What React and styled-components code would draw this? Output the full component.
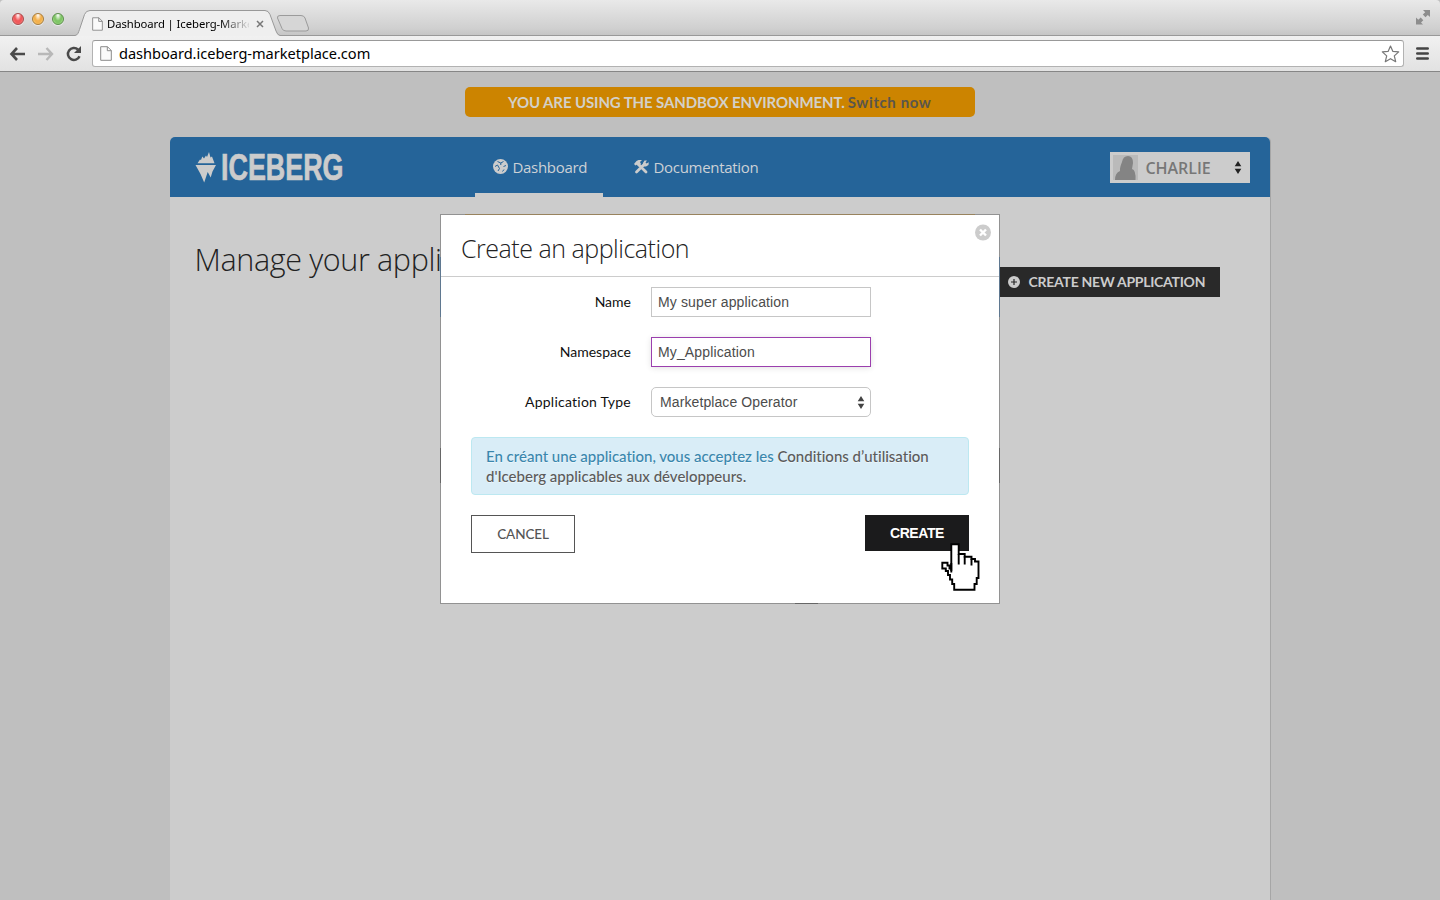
import React from 'react';
import styled, { createGlobalStyle } from 'styled-components';

const Global = createGlobalStyle`
  *{box-sizing:border-box}
  body{margin:0;background:#bfbfbf;overflow:hidden}
  svg{display:block;flex:none}
  button{cursor:pointer;margin:0}
`;
const ui = "'Noto Sans','Open Sans',sans-serif";
const lato = "Lato,sans-serif";
const open = "'Open Sans',sans-serif";
const helv = "'Liberation Sans',Arial,sans-serif";

const Screen = styled.div`position:relative;width:1440px;height:900px;overflow:hidden;display:flex;flex-direction:column;background:#bfbfbf;`;
const TitleBar = styled.header`height:36px;flex:none;display:flex;align-items:flex-end;position:relative;background:linear-gradient(#e9e9e9,#d0d0d0 80%,#c6c6c6);border-bottom:1px solid #999;border-radius:4px 4px 0 0;`;
const Lights = styled.div`display:flex;gap:8px;padding:0 0 10px 12px;width:75px;`;
const Light = styled.i`width:12px;height:12px;border-radius:50%;border:1px solid ${p => p.$edge};background:radial-gradient(ellipse at 50% 12%,#fff 0,${p => p.$c} 45%,${p => p.$c} 60%,${p => p.$lo} 100%);box-shadow:0 1px 1px rgba(255,255,255,.6);`;
const Tab = styled.div`position:relative;width:205px;height:26px;margin-bottom:-1px;flex:none;display:flex;align-items:center;padding:2px 0 0 17px;`;
const TabShape = styled.svg`position:absolute;left:0;top:0;`;
const TabTitle = styled.span`position:relative;width:142px;margin-left:4px;overflow:hidden;white-space:nowrap;font:11.3px/16px ${ui};letter-spacing:-.08px;color:#000;-webkit-mask-image:linear-gradient(90deg,#000 112px,transparent 145px);`;
const TabClose = styled.svg`position:relative;margin-left:7px;`;
const TabIcon = styled.svg`position:relative;`;
const NewTab = styled.svg`margin:0 0 3px -4px;`;
const Expand = styled.svg`margin:0 10px 10px auto;`;
const ToolBar = styled.nav`height:36px;flex:none;display:flex;align-items:center;padding:0 11px 0 9px;background:linear-gradient(#f1f1f1,#e2e2e2);border-bottom:1px solid #868686;`;
const NavIcon = styled.svg`margin-right:${p => p.$gap}px;`;
const Address = styled.div`height:27px;width:1312px;background:#fff;border:1px solid #b2b2b2;border-top-color:#999;border-radius:3px;display:flex;align-items:center;padding:0 3px 0 7px;margin-right:12px;`;
const Url = styled.span`font:14.6px/22px ${ui};color:#000;margin-left:7px;flex:1;letter-spacing:-.03px;padding-bottom:2px;`;

const Page = styled.main`flex:1;display:flex;flex-direction:column;align-items:center;padding-top:15px;`;
const Banner = styled.div`width:510px;height:30px;flex:none;border-radius:5px;background:#cc8400;display:flex;align-items:center;padding:0 0 0 43px;gap:3px;font:bold 15px/20px ${lato};color:#d3d0c9;white-space:nowrap;`;
const BannerText = styled.span`letter-spacing:${p => p.$ls}px;`;
const BannerLink = styled.a`color:#5a564c;letter-spacing:${p => p.$ls}px;`;
const Panel = styled.section`width:1101px;flex:1;margin-top:20px;border-radius:5px 5px 0 0;background:#ccc;border-right:1px solid #a6a6a6;`;
const Nav = styled.div`height:60px;background:#256499;border-radius:5px 5px 0 0;display:flex;padding-left:25px;align-items:stretch;`;
const Logo = styled.svg`margin-top:13px;overflow:visible;`;
const NavItem = styled.a`display:flex;align-items:center;gap:5px;padding:3px 0 0 18px;margin-left:${p => p.$ml}px;width:${p => p.$w}px;border-bottom:4px solid ${p => p.$on ? '#ccc' : 'transparent'};color:#ccd1d6;font:15px/20px ${open};letter-spacing:-.3px;`;
const User = styled.div`width:140px;height:31px;margin:15px 20px 0 auto;background:#ccc;display:flex;align-items:center;padding:0 8px 0 3px;`;
const UserName = styled.span`flex:1;margin-left:8px;font:600 16px/20px ${open};letter-spacing:-.05px;color:#777;`;
const Heading = styled.div`display:flex;justify-content:space-between;padding:40px 50px 0 25px;`;
const Title = styled.h1`margin:-1px 0 0;font:300 30.5px/46px ${open};letter-spacing:-.36px;color:#222;`;
const NewButton = styled.button`margin-top:30px;width:221px;height:30px;border:0;background:#292929;color:#ccc;display:flex;align-items:center;gap:9px;padding:0 0 0 9px;font:bold 14px/20px ${lato};letter-spacing:-.26px;white-space:nowrap;`;

const Modal = styled.div`position:absolute;left:440px;top:214px;width:560px;height:390px;padding:1px;
  background:linear-gradient(#98835e,#98835e) 25px 0/510px 1px no-repeat,linear-gradient(#5f7890,#5f7890) 0 43px/100% 60px no-repeat,linear-gradient(#666,#666) 0 234px/100% 35px no-repeat,linear-gradient(#666,#666) 355px 389px/23px 1px no-repeat,#929292;`;
const ModalBody = styled.div`height:388px;background:#fff;`;
const ModalHead = styled.div`height:62px;border-bottom:1px solid #ccc;display:flex;justify-content:space-between;padding:9px 8px 0 20px;`;
const ModalTitle = styled.h2`margin:0;padding-top:6px;font:300 25px/36px ${open};letter-spacing:-.48px;color:#222;`;
const Form = styled.form`padding:10px 30px 0;`;
const Field = styled.div`height:30px;margin-bottom:20px;display:flex;align-items:center;`;
const Label = styled.label`width:160px;margin-right:20px;text-align:right;font:400 14px/20px ${lato};letter-spacing:${p => p.$ls}px;color:#111;`;
const Input = styled.div`width:220px;height:30px;border:1px solid ${p => p.$focus ? '#9b3fae' : '#c6c6c6'};border-radius:${p => p.$round || 0}px;box-shadow:${p => p.$focus ? '0 1px 6px rgba(0,0,0,.12)' : 'none'};display:flex;align-items:center;justify-content:space-between;padding:0 5px 0 ${p => p.$round ? 8 : 6}px;font:14px/20px ${helv};letter-spacing:${p => p.$ls}px;color:#4c4c4c;`;
const Notice = styled.p`margin:0 0 20px;height:58px;padding:8px 14px;border:1px solid #bce8f1;border-radius:4px;background:#d9edf7;color:#3a87ad;font:500 15px/20px ${lato};text-shadow:0 1px 0 rgba(255,255,255,.5);white-space:nowrap;font-variant-ligatures:none;`;
const Line = styled.span`display:block;letter-spacing:${p => p.$ls}px;`;
const Terms = styled.a`color:#5b5b5b;`;
const Actions = styled.div`display:flex;justify-content:space-between;align-items:flex-start;`;
const Cancel = styled.button`width:104px;height:38px;border:1px solid #555;background:#fff;color:#555;padding:0;font:500 13.5px/20px ${lato};letter-spacing:-.1px;`;
const Create = styled.button`width:104px;height:36px;border:0;background:#1b1b1c;color:#fff;padding:0;font:bold 14px/20px ${helv};letter-spacing:-.4px;`;
const Pointer = styled.svg`position:absolute;left:941px;top:543px;`;

const PageIcon = ({ w, h }) => (
  <TabIcon width={w} height={h} viewBox="0 0 12 15"><path d="M.7.7H7.5L11.3 4.5V14.3H.7ZM7.3.7V4.7H11.3" fill="#fafafa" stroke="#8a8a8a" /></TabIcon>
);
const Sorter = ({ c }) => (
  <svg width="8" height="13" viewBox="0 0 8 13"><path d="M4 0L7.3 5.2H.7ZM4 13L.7 7.8H7.3Z" fill={c} /></svg>
);

export default function App() {
  return (
    <Screen>
      <Global />
      <TitleBar>
        <Lights>
          <Light $c="#f0585a" $lo="#ff9c9a" $edge="#a84a4a" />
          <Light $c="#f3b04c" $lo="#ffe493" $edge="#a87c3c" />
          <Light $c="#7fc566" $lo="#c8f3a8" $edge="#5c8f4c" />
        </Lights>
        <Tab>
          <TabShape width="205" height="26" viewBox="0 0 205 26"><path d="M0 25.5C3 25.2 3.5 22 4.5 19.5L9.5 4.5Q11 .5 15 .5H190Q193.5 .5 195 4.5L201 21Q202.5 25.3 205 25.5V26H0Z" fill="#efefef" /><path d="M0 25.5C3 25.2 3.5 22 4.5 19.5L9.5 4.5Q11 .5 15 .5H190Q193.5 .5 195 4.5L201 21Q202.5 25.3 205 25.5" fill="none" stroke="#999" /></TabShape>
          <PageIcon w={11} h={14} />
          <TabTitle>Dashboard | Iceberg-Marketplace</TabTitle>
          <TabClose width="8" height="8" viewBox="0 0 8 8"><path d="M1 1L7 7M7 1L1 7" stroke="#777" strokeWidth="1.5" /></TabClose>
        </Tab>
        <NewTab width="34" height="17" viewBox="0 0 34 17"><path d="M4 .5H25Q28 .5 29 3L32.5 13Q33 16 30 16H10Q7 16 6 13.5L1.5 3Q1 .5 4 .5Z" fill="#d6d6d6" stroke="#9b9b9b" /></NewTab>
        <Expand width="14" height="15" viewBox="0 0 14 15"><path d="M7 0H14V7L11.8 5L9.5 7.3L6.8 4.6L9.2 2.3ZM0 7.5L2.3 9.8L4.7 7.5L7.3 10.2L5 12.5L7 14.5H0Z" fill="#8d8d8d" /></Expand>
      </TitleBar>
      <ToolBar>
        <NavIcon $gap={12} width="17" height="14" viewBox="0 0 17 14"><path d="M8 1L2.5 7L8 13M2.5 7H16" fill="none" stroke="#4a4a4a" strokeWidth="2.6" /></NavIcon>
        <NavIcon $gap={12} width="16" height="14" viewBox="0 0 16 14"><path d="M8.5 1L14 7L8.5 13M14 7H0" fill="none" stroke="#b8b8b8" strokeWidth="2.4" /></NavIcon>
        <NavIcon $gap={10} width="16" height="16" viewBox="0 0 16 16"><path d="M13.5 10.2A6 6 0 1 1 12 3.5" fill="none" stroke="#4a4a4a" strokeWidth="2.5" /><path d="M15 0V7H8Z" fill="#4a4a4a" /></NavIcon>
        <Address>
          <PageIcon w={12} h={15} />
          <Url>dashboard.iceberg-marketplace.com</Url>
          <svg width="19" height="18" viewBox="0 0 19 18"><path d="M9.5 1L11.9 6.4L17.7 6.9L13.3 10.9L14.7 16.7L9.5 13.7L4.3 16.7L5.7 10.9L1.3 6.9L7.1 6.4Z" fill="#fff" stroke="#777" strokeWidth="1.2" strokeLinejoin="round" /></svg>
        </Address>
        <svg width="13" height="13" viewBox="0 0 13 13"><path d="M1.3 1.5H11.7M1.3 6.5H11.7M1.3 11.5H11.7" stroke="#444" strokeWidth="2.6" strokeLinecap="round" /></svg>
      </ToolBar>
      <Page>
        <Banner>
          <BannerText $ls={-.11}>YOU ARE USING THE SANDBOX ENVIRONMENT.</BannerText>
          <BannerLink $ls={.6}>Switch now</BannerLink>
        </Banner>
        <Panel>
          <Nav>
            <Logo width="150" height="34" viewBox="0 0 150 34">
              <path d="M2.5 13.2L5 9.5L6 10L7.3 6.5L9 8.5L11 5.5L12 7L14 2L15.5 7.5L17 6.5L19.5 13.2ZM.5 15H21L17.5 21.5L15.7 27.5L12.7 22L9.2 32.5L5.5 24Z" fill="#ccc" />
              <text x="26" y="29.6" fontFamily="'Liberation Sans Narrow','Liberation Sans',sans-serif" fontWeight="700" fontSize="36" textLength="122.5" lengthAdjust="spacingAndGlyphs" fill="#ccc" stroke="#ccc" strokeWidth=".7">ICEBERG</text>
            </Logo>
            <NavItem $on $ml={130} $w={128}>
              <svg width="15" height="15" viewBox="0 0 15 15"><circle cx="7.5" cy="7.5" r="7.5" fill="#ccc" /><path d="M4.5 2.5L7.8 4L10.5 2.5M7.8 4V6M2 7.5L4.5 6L6.5 9.5L5 12M10.5 7.5L13 6.5M9.5 12.5L11 10.5" stroke="#256499" strokeWidth="1" fill="none" /></svg>
              Dashboard
            </NavItem>
            <NavItem $ml={13} $w={145}>
              <svg width="15" height="14" viewBox="0 0 15 14"><path d="M2.5 12L10.5 4M5 5L12 12" stroke="#ccc" strokeWidth="2.8" strokeLinecap="round" /><path d="M0 4L2.5 1L4.5 0H8L6 2L7 4L4.5 6.5L2.8 4.8L1.5 5.5ZM9 3L10.5 .5L13 .5L11.5 2.5L12.5 3.5L14.8 2.2L14.5 5L12 6.5H9Z" fill="#ccc" /></svg>
              Documentation
            </NavItem>
            <User>
              <svg width="25" height="25" viewBox="0 0 25 25"><path d="M0 0H25V25H0Z" fill="#bababa" /><path d="M2 25Q2 18 7 16Q6.5 13 9 7Q10 1 15 1Q20 1 20 8L19 14Q23 15 22.5 25Z" fill="#848484" /></svg>
              <UserName>CHARLIE</UserName>
              <Sorter c="#222" />
            </User>
          </Nav>
          <Heading>
            <Title>Manage your applications</Title>
            <NewButton type="button">
              <svg width="12" height="12" viewBox="0 0 12 12"><circle cx="6" cy="6" r="6" fill="#ccc" /><path d="M6 3V9M3 6H9" stroke="#292929" strokeWidth="1.2" /></svg>
              CREATE NEW APPLICATION
            </NewButton>
          </Heading>
        </Panel>
      </Page>
      <Modal role="dialog">
        <ModalBody>
          <ModalHead>
            <ModalTitle>Create an application</ModalTitle>
            <svg width="16" height="17" viewBox="0 0 16 17"><circle cx="8" cy="8.5" r="8" fill="#ccc" /><path d="M5 5.5L11 11.5M11 5.5L5 11.5" stroke="#fff" strokeWidth="2.4" /></svg>
          </ModalHead>
          <Form>
            <Field><Label $ls={0}>Name</Label><Input $ls={.14}>My super application</Input></Field>
            <Field><Label $ls={.02}>Namespace</Label><Input $focus $ls={.14}>My_Application</Input></Field>
            <Field><Label $ls={.24}>Application Type</Label><Input $round={5} $ls={.1}>Marketplace Operator<Sorter c="#444" /></Input></Field>
            <Notice>
              <Line $ls={-.01}>En créant une application, vous acceptez les <Terms>Conditions d’utilisation</Terms></Line>
              <Line $ls={0}><Terms>d'Iceberg applicables aux développeurs.</Terms></Line>
            </Notice>
            <Actions>
              <Cancel type="button">CANCEL</Cancel>
              <Create type="button">CREATE</Create>
            </Actions>
          </Form>
        </ModalBody>
      </Modal>
      <Pointer width="40" height="49" viewBox="0 0 40 49">
        <path d="M10.3 28V1.3H17.7V11H23.7V13.7H30.5V16H34V18.5H37.5V35H35.7V41H33.5V46.7H13.2V41H11.2V36.5H9V32H7V28H4.8V25.5H1.3V19.8H6.5V22.5H8.5V25.5H10.3" fill="#fff" stroke="#000" strokeWidth="1.9" />
        <path d="M10.3 20V29.5M17.7 11V21.5M23.7 13V21.5M30.5 15.5V22.5" fill="none" stroke="#000" strokeWidth="1.9" />
      </Pointer>
    </Screen>
  );
}
